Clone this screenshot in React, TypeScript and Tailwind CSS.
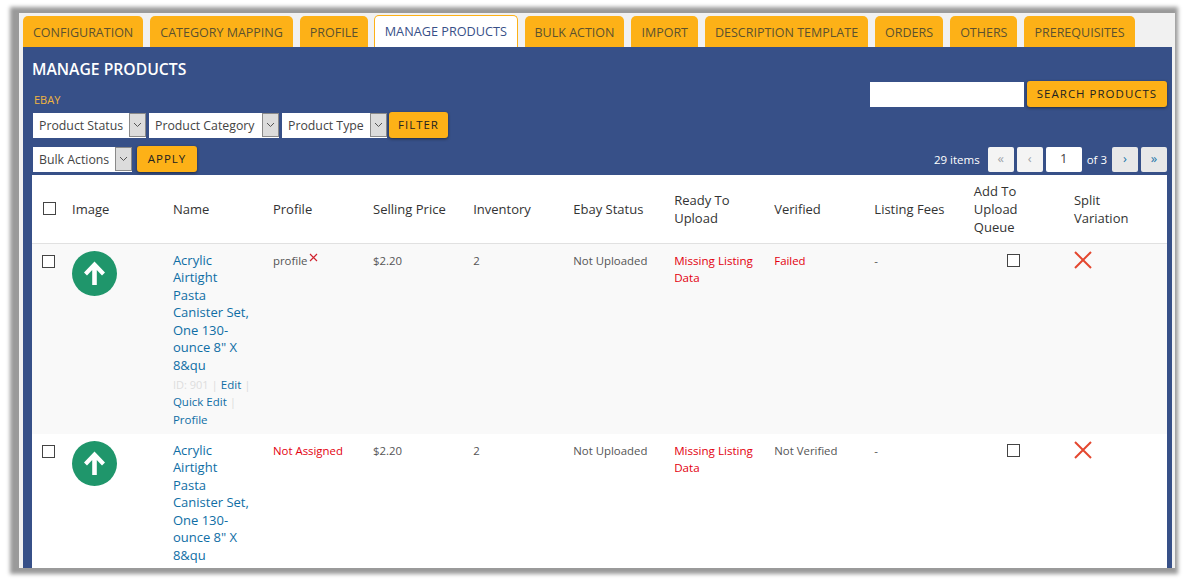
import React from "react";

const tabs = [
  "CONFIGURATION",
  "CATEGORY MAPPING",
  "PROFILE",
  "MANAGE PRODUCTS",
  "BULK ACTION",
  "IMPORT",
  "DESCRIPTION TEMPLATE",
  "ORDERS",
  "OTHERS",
  "PREREQUISITES",
];

const columns = [
  "Image",
  "Name",
  "Profile",
  "Selling Price",
  "Inventory",
  "Ebay Status",
  "Ready To Upload",
  "Verified",
  "Listing Fees",
  "Add To Upload Queue",
  "Split Variation",
];

const rows = [
  { id: 901, profile: "profile", verified: "Failed", shaded: true },
  { id: 902, profile: null, verified: "Not Verified", shaded: false },
];

function Check({ className = "" }: { className?: string }) {
  return <span className={`block w-[13px] h-[13px] border border-[#444] bg-white ${className}`} />;
}

function FakeSelect({ label, width }: { label: string; width: string }) {
  return (
    <div className={`${width} h-[25px] bg-white flex items-center justify-between pl-[6px] text-[12.300px] text-[#444]`}>
      <span className="whitespace-nowrap pt-[3px]">{label}</span>
      <span className="w-[17px] h-[24px] bg-[#dcdcdc] border border-[#8a8a8a] flex items-center justify-center shrink-0">
        <svg width="9" height="6" viewBox="0 0 9 6" fill="none" stroke="#555" strokeWidth="1">
          <path d="M1 1l3.5 3.5L8 1" />
        </svg>
      </span>
    </div>
  );
}

function OrangeButton({ label, className = "" }: { label: string; className?: string }) {
  return (
    <button className={`h-[26px] bg-[#fdb117] rounded-[3px] text-[11.500px] font-medium text-[#222] tracking-[1px] shadow-[0_1px_3px_rgba(20,20,20,0.6)] whitespace-nowrap ${className}`}>
      {label}
    </button>
  );
}

function PageBtn({ label, active }: { label: string; active?: boolean }) {
  return (
    <span className={`w-[26px] h-[25px] flex items-center justify-center text-[13px] rounded-[2px] ${active ? "bg-[#e8e8e8] text-[#1f77a8]" : "bg-[#f4f4f4] text-[#a0a5aa]"}`}>
      {label}
    </span>
  );
}

function UploadIcon() {
  return (
    <svg width="45" height="45" viewBox="0 0 45 45" className="block">
      <circle cx="22.5" cy="22.5" r="22.5" fill="#1f966b" />
      <path d="M22.5 10.5L33 21.5l-3 3-5.2-5.4V34h-4.6V19.1L15 24.500l-3-3z" fill="#fff" />
    </svg>
  );
}

function BigX() {
  return (
    <svg width="18" height="18" viewBox="0 0 18 18" stroke="#e4472f" strokeWidth="2" className="block">
      <path d="M1 1l16 16M17 1L1 17" />
    </svg>
  );
}

export default function App() {
  return (
    <div className="w-[1191px] h-[581px] bg-white overflow-hidden pl-[19px] pr-[16px] pt-[13px] font-['Open_Sans','Noto_Sans',sans-serif]">
      <div className="h-[555px] bg-[#f1f1f1] overflow-hidden shadow-[-3px_0_4px_6px_#9a9a9a]">
        <div className="flex gap-[7px] pl-[4px] pt-[3px] h-[34px] items-end">
          {tabs.map((t) =>
            t === "MANAGE PRODUCTS" ? (
              <div key={t} className="-ml-[1px] h-[32px] px-[9.500px] flex items-center bg-white border border-b-0 border-[#fdb117] rounded-t-[5px] text-[12.700px] text-[#375088] whitespace-nowrap">
                {t}
              </div>
            ) : (
              <div key={t} className="h-[31px] px-[10px] pt-[4px] flex items-center bg-[#fdb117] rounded-t-[5px] text-[12.500px] text-[#5b5130] whitespace-nowrap">
                {t}
              </div>
            )
          )}
        </div>

        <div className="ml-[4px] mr-[3px] bg-[#375088] pl-[9px] pr-[5px] h-[530px]">
          <div className="flex justify-between items-start">
            <div>
              <h1 className="pt-[12px] text-[15.700px] leading-[20px] font-semibold text-white">MANAGE PRODUCTS</h1>
              <div className="mt-[13px] text-[11px] leading-[16px] text-[#f0b53f] pl-[2px]">EBAY</div>
              <div className="mt-[4px] ml-[1px] flex items-center gap-[3px]">
                <FakeSelect label="Product Status" width="w-[113px]" />
                <FakeSelect label="Product Category" width="w-[130px]" />
                <FakeSelect label="Product Type" width="w-[105px]" />
                <OrangeButton label="FILTER" className="w-[59px] -ml-[1px]" />
              </div>
            </div>
            <div className="mt-[34px] flex items-center gap-[3px]">
              <input className="w-[154px] h-[25px] bg-white outline-none" />
              <OrangeButton label="SEARCH PRODUCTS" className="w-[140px]" />
            </div>
          </div>

          <div className="mt-[8px] flex justify-between items-center h-[26px]">
            <div className="ml-[1px] flex items-center gap-[5px]">
              <FakeSelect label="Bulk Actions" width="w-[99px]" />
              <OrangeButton label="APPLY" className="w-[60px]" />
            </div>
            <div className="flex items-center text-[11.500px] text-white">
              <span className="mr-[8px] pt-[1px]">29 items</span>
              <span className="flex items-center gap-[3px]">
                <PageBtn label="«" />
                <PageBtn label="‹" />
              </span>
              <span className="ml-[3px] w-[36px] h-[25px] bg-white text-[#444] text-[13px] flex items-center justify-center rounded-[2px]">1</span>
              <span className="mx-[5px] pt-[1px]">of 3</span>
              <span className="flex items-center gap-[3px]">
                <PageBtn label="›" active />
                <PageBtn label="»" active />
              </span>
            </div>
          </div>

          <table className="mt-[3px] w-[1135px] table-fixed border-collapse">
            <colgroup>
              <col className="w-[30px]" />
              <col className="w-[100.900px]" />
              <col className="w-[100.100px]" />
              <col className="w-[100.100px]" />
              <col className="w-[100.100px]" />
              <col className="w-[100.100px]" />
              <col className="w-[100.900px]" />
              <col className="w-[100.100px]" />
              <col className="w-[100.100px]" />
              <col className="w-[99.500px]" />
              <col className="w-[100.100px]" />
              <col />
            </colgroup>
            <thead>
              <tr className="h-[68px] bg-white border-b border-[#e1e1e1]">
                <th className="pl-[11px]">
                  <Check />
                </th>
                {columns.map((c) => (
                  <th key={c} className="pl-[10px] pr-[10px] text-left font-normal text-[13px] leading-[18px] text-[#333]">
                    {c}
                  </th>
                ))}
              </tr>
            </thead>
            <tbody className="text-[11.400px] leading-[17.500px] text-[#555]">
              {rows.map((r) => (
                <tr key={r.id} className={`align-top ${r.shaded ? "bg-[#f9f9f9]" : "bg-white"}`}>
                  <td className="pl-[10px] pt-[11px]">
                    <Check />
                  </td>
                  <td className="pl-[10px] pt-[7px]">
                    <UploadIcon />
                  </td>
                  <td className="pl-[10px] pr-[10px] pt-[8px] pb-[6px]">
                    <div className="text-[13px] leading-[17.500px] font-medium text-[#0f6ea5]">
                      Acrylic Airtight Pasta Canister Set, One 130-ounce 8" X 8&amp;qu
                    </div>
                    {r.shaded && (
                      <div className="mt-[2px] text-[#ddd] text-[11.500px] leading-[17.300px]">
                        <span className="text-[11px]">ID: 901</span> | <span className="text-[#0f6ea5]">Edit</span>{"\u00a0"}| <span className="text-[#0f6ea5]">Quick{"\u00a0"}Edit</span>{"\u00a0"}| <span className="text-[#0f6ea5]">Profile</span>
                      </div>
                    )}
                  </td>
                  <td className="pl-[10px] pt-[8px]">
                    {r.profile ? (
                      <span className="flex items-start">
                        {r.profile}
                        <svg width="9" height="9" viewBox="0 0 9 9" stroke="#d0222e" strokeWidth="1.200" className="mt-[1px] ml-[2px]">
                          <path d="M1 1l7 7M8 1L1 8" />
                        </svg>
                      </span>
                    ) : (
                      <span className="text-[#e3000f]">Not Assigned</span>
                    )}
                  </td>
                  <td className="pl-[10px] pt-[8px]">$2.20</td>
                  <td className="pl-[10px] pt-[8px]">2</td>
                  <td className="pl-[10px] pt-[8px]">Not Uploaded</td>
                  <td className="pl-[10px] pr-[4px] pt-[8px] text-[11.600px] font-medium text-[#e3000f]">Missing Listing Data</td>
                  <td className={`pl-[10px] pt-[8px] ${r.verified === "Failed" ? "font-medium text-[#e3000f]" : ""}`}>{r.verified}</td>
                  <td className="pl-[10px] pt-[8px]">-</td>
                  <td className="pt-[10px]">
                    <Check className="mx-auto" />
                  </td>
                  <td className="pl-[10px] pt-[7px]">
                    <BigX />
                  </td>
                </tr>
              ))}
            </tbody>
          </table>
        </div>
      </div>
    </div>
  );
}
